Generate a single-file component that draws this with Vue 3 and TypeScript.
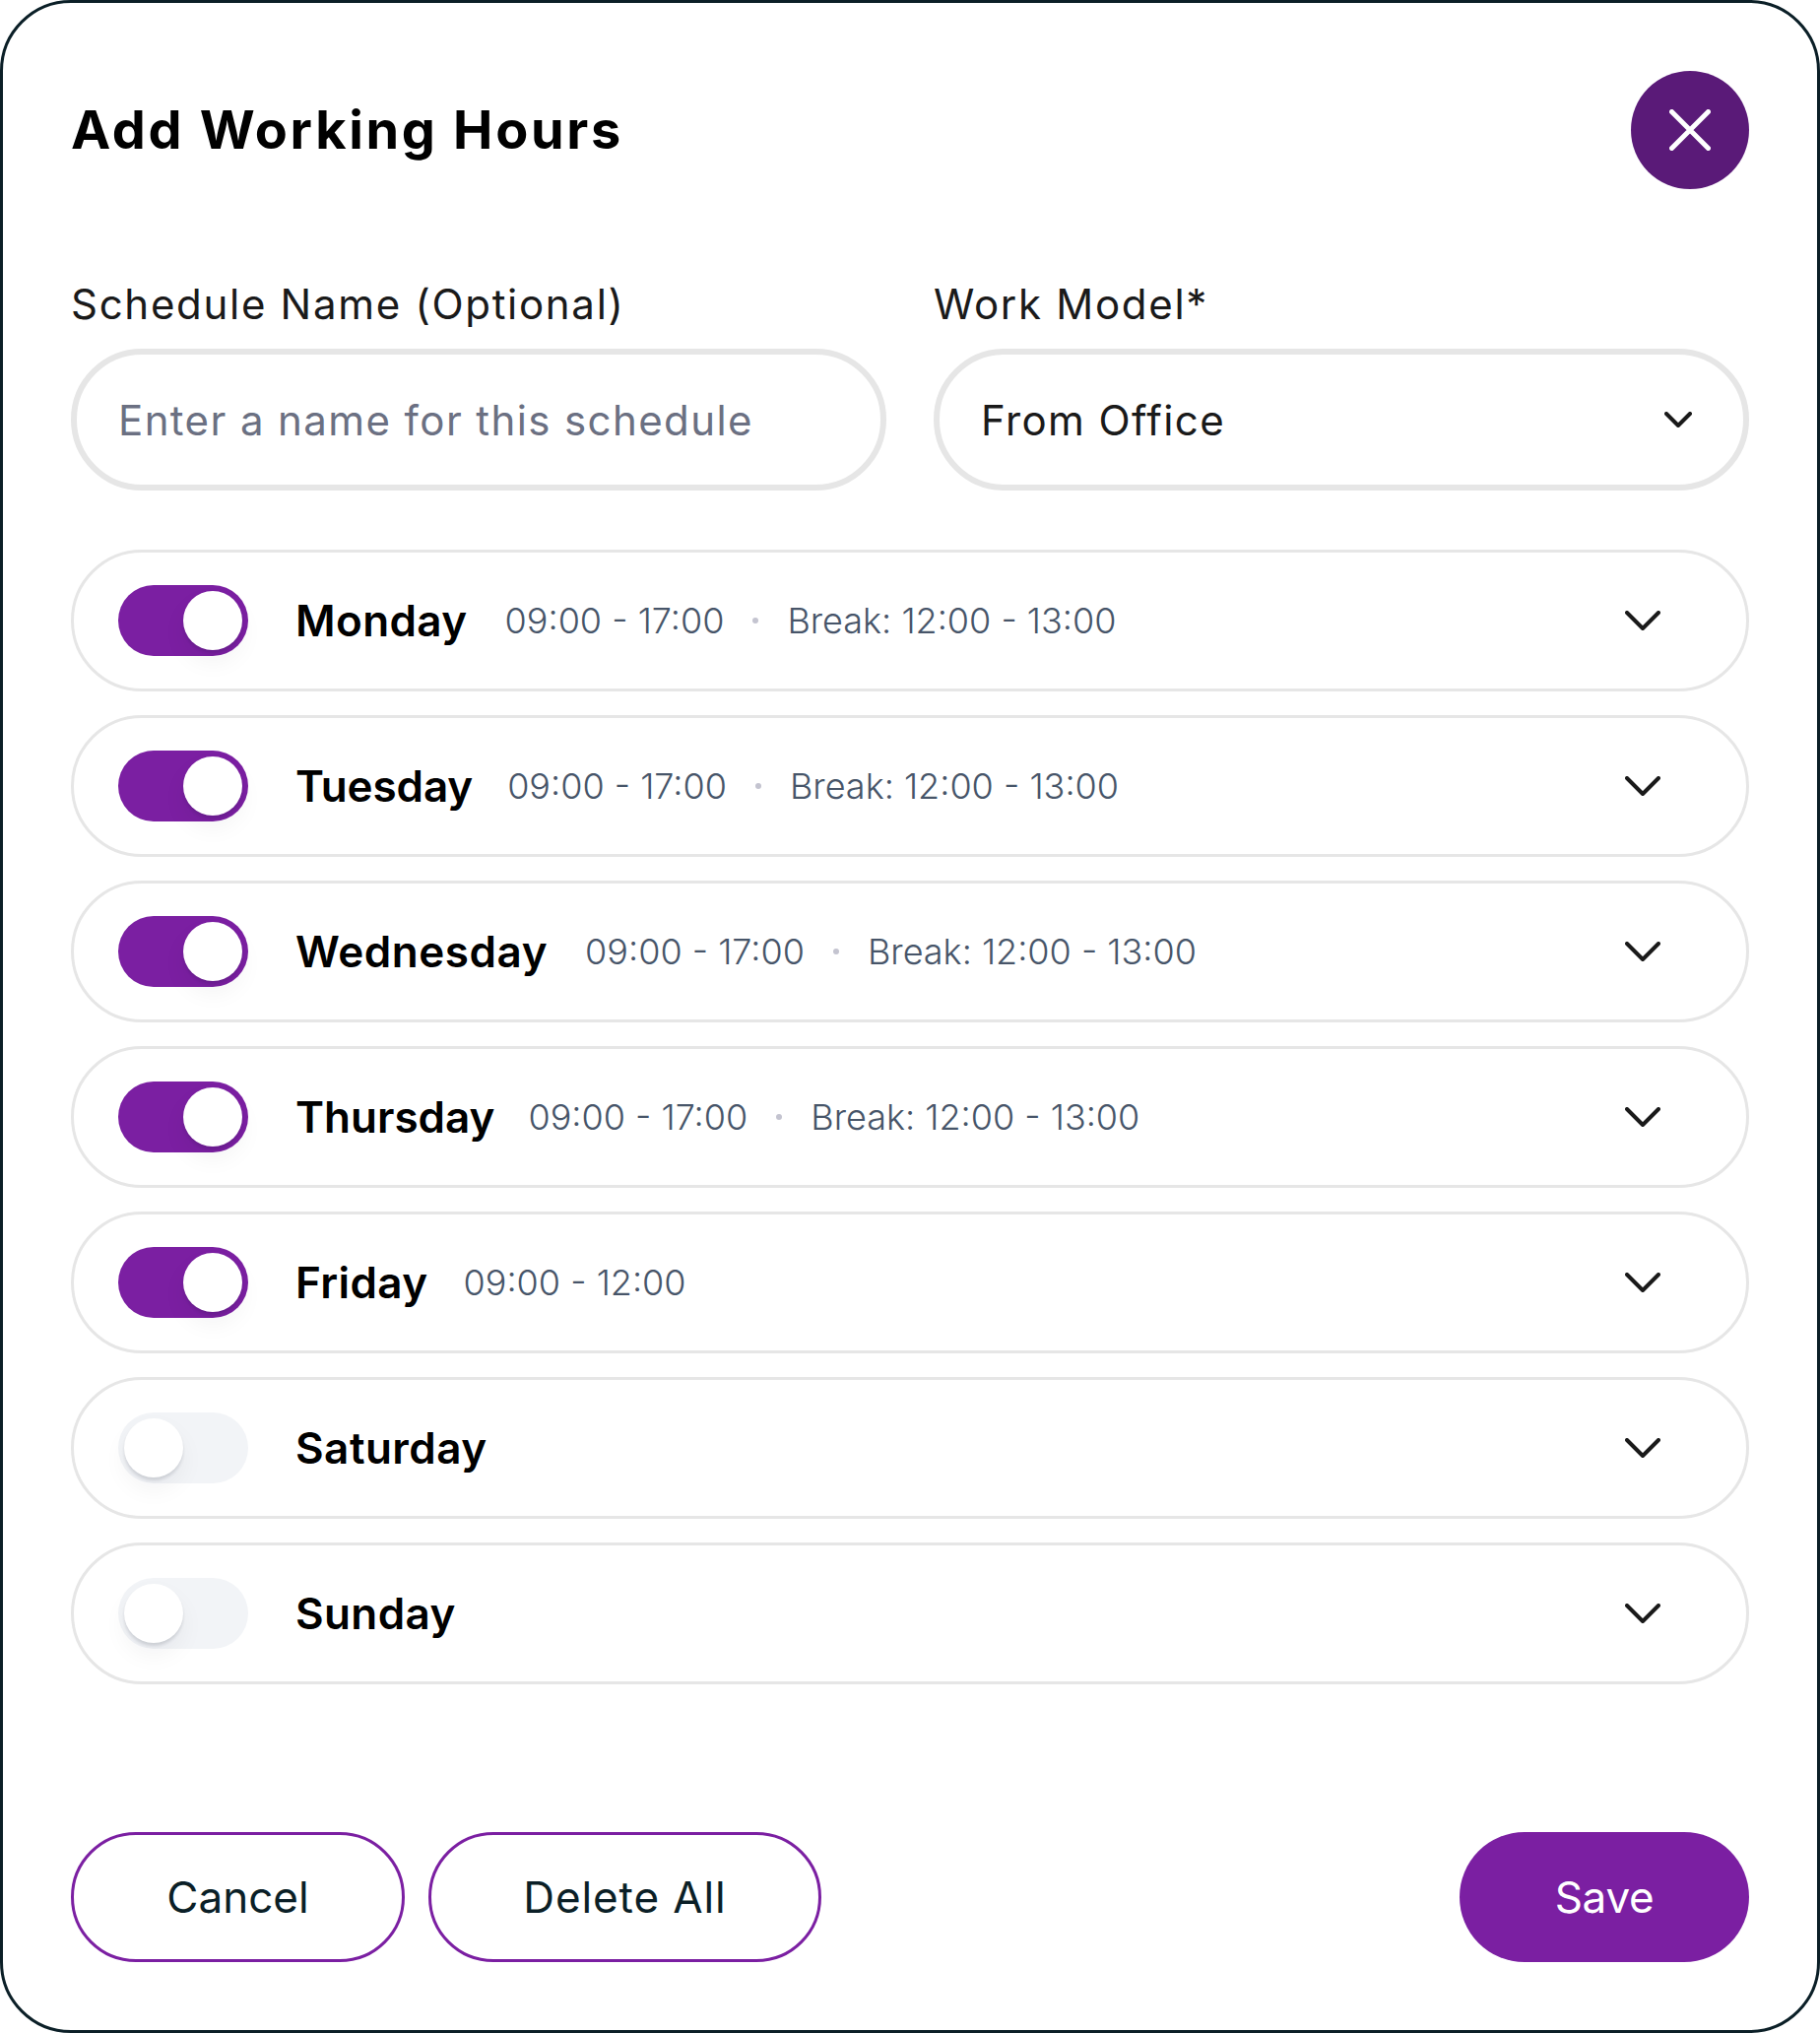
<template>
  <div class="modal">
    <header class="head">
      <h1 class="title">Add Working Hours</h1>
      <button class="close" aria-label="Close">
        <svg width="42" height="42" viewBox="0 0 42 42" fill="none" stroke="#fff" stroke-width="5" stroke-linecap="round">
          <path d="M2.5 2.5 39.5 39.5M39.5 2.5 2.5 39.5" />
        </svg>
      </button>
    </header>

    <div class="fields">
      <label class="field">
        <span class="label">Schedule Name (Optional)</span>
        <input class="input" type="text" placeholder="Enter a name for this schedule" />
      </label>
      <div class="field">
        <span class="label">Work Model*</span>
        <div class="input select">
          <span>From Office</span>
          <svg width="28" height="16" viewBox="0 0 28 16" fill="none" stroke="#1a1a1a" stroke-width="4" stroke-linecap="round" stroke-linejoin="round">
            <path d="M2 2 14 14 26 2" />
          </svg>
        </div>
      </div>
    </div>

    <div class="days">
      <div v-for="d in days" :key="d.name" class="day">
        <span class="toggle" :class="{ on: d.on }"><span class="thumb"></span></span>
        <span class="day-name" :style="{ letterSpacing: d.spacing + 'px', marginRight: d.gap + 'px' }">{{ d.name }}</span>
        <span v-if="d.hours" class="hours">{{ d.hours }}</span>
        <template v-if="d.pause">
          <span class="dot"></span>
          <span class="hours">{{ d.pause }}</span>
        </template>
        <svg class="day-arrow" width="36" height="20" viewBox="0 0 36 20" fill="none" stroke="#1a1a1a" stroke-width="4" stroke-linecap="round" stroke-linejoin="round">
          <path d="M2 2 18 18 34 2" />
        </svg>
      </div>
    </div>

    <footer class="foot">
      <button class="btn outline cancel">Cancel</button>
      <button class="btn outline delete">Delete All</button>
      <button class="btn save">Save</button>
    </footer>
  </div>
</template>

<script setup lang="ts">
interface Day {
  name: string
  on: boolean
  hours?: string
  pause?: string
  spacing: number
  gap: number
}

const pause = 'Break: 12:00 - 13:00'
const days: Day[] = [
  { name: 'Monday', on: true, hours: '09:00 - 17:00', pause, spacing: 0.4, gap: 38 },
  { name: 'Tuesday', on: true, hours: '09:00 - 17:00', pause, spacing: -0.1, gap: 35 },
  { name: 'Wednesday', on: true, hours: '09:00 - 17:00', pause, spacing: 0.55, gap: 38 },
  { name: 'Thursday', on: true, hours: '09:00 - 17:00', pause, spacing: 0, gap: 34 },
  { name: 'Friday', on: true, hours: '09:00 - 12:00', spacing: 0.4, gap: 36 },
  { name: 'Saturday', on: false, spacing: 0.5, gap: 38 },
  { name: 'Sunday', on: false, spacing: 0.4, gap: 38 },
]
</script>

<style>
html, body { background: #fff; }
</style>

<style scoped>
.modal {
  box-sizing: border-box;
  width: 1848px;
  height: 2064px;
  padding: 69px;
  border: 3px solid #0b1f27;
  border-radius: 72px;
  background: #fff;
  display: flex;
  flex-direction: column;
  font-family: Inter, "Noto Sans", sans-serif;
  color: #000;
}
.head { display: flex; align-items: center; justify-content: space-between; height: 120px; }
.title { margin: 0; font-size: 54px; font-weight: 700; line-height: 1; letter-spacing: 2.7px; }
.close {
  width: 120px; height: 120px; padding: 0; border: 0; border-radius: 50%;
  background: #5a1a78; display: flex; align-items: center; justify-content: center;
}
.fields { display: grid; grid-template-columns: 1fr 1fr; gap: 48px; margin-top: 90px; }
.field { display: flex; flex-direction: column; gap: 18px; }
.label { font-size: 42px; line-height: 54px; color: #1a1a1a; letter-spacing: 1.7px; }
.input {
  box-sizing: border-box; width: 100%; height: 144px; padding: 0 42px;
  border: 6px solid #e6e6e6; border-radius: 72px; background: #fff;
  font: 400 42px Inter, "Noto Sans", sans-serif; letter-spacing: 1.4px; color: #1a1a1a; outline: none;
}
.input::placeholder { color: #6b7082; opacity: 1; }
.select { display: flex; align-items: center; justify-content: space-between; padding-right: 52px; }
.days { display: flex; flex-direction: column; gap: 24px; margin-top: 60px; }
.day {
  box-sizing: border-box; height: 144px; padding: 0 87px 0 45px;
  border: 3px solid #e6e6e6; border-radius: 72px;
  display: flex; align-items: center;
}
.toggle {
  position: relative; flex: none; width: 132px; height: 72px; margin-right: 48px;
  border-radius: 36px; background: #f2f4f7;
}
.toggle.on { background: #7b1fa2; }
.thumb {
  position: absolute; top: 6px; left: 6px; width: 60px; height: 60px;
  border-radius: 50%; background: #fff;
  box-shadow: 0 3px 3px rgba(16, 24, 40, .12), 0 12px 24px rgba(16, 24, 40, .05);
}
.toggle.on .thumb { left: 66px; }
.day-name { font-size: 44px; font-weight: 600; }
.hours { font-size: 36px; font-weight: 300; color: #475569; }
.dot { width: 6px; height: 6px; margin: 0 29px; border-radius: 50%; background: #c4c4d0; }
.day-arrow { margin-left: auto; }
.foot { display: flex; gap: 24px; margin-top: auto; }
.btn {
  box-sizing: border-box; height: 132px; border-radius: 66px; padding: 0;
  font: 400 44px Inter, "Noto Sans", sans-serif;
}
.outline { border: 3px solid #7b1fa2; background: #fff; color: #0b1f27; }
.cancel { width: 339px; }
.delete { width: 399px; letter-spacing: 0.9px; }
.save { width: 294px; margin-left: auto; border: 0; background: #7b1fa2; color: #fff; letter-spacing: -0.3px; }
</style>
